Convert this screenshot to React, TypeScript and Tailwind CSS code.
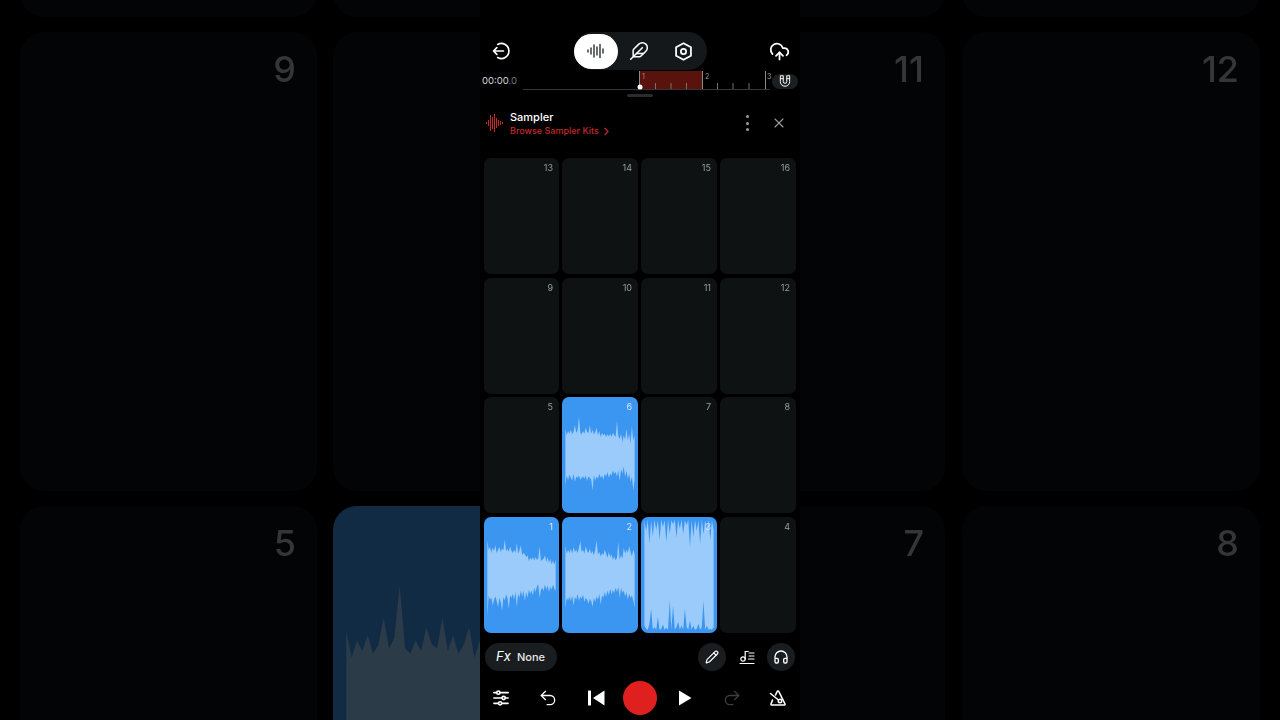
import {
  ChevronRight,
  CloudUpload,
  Feather,
  Headphones,
  Pencil,
  Redo2,
  Undo2,
  X,
} from "lucide-react";

const wave1 = {
  top: [90, 118, 110, 128, 112, 122, 105, 128, 118, 110, 125, 115, 120, 88, 122, 115, 125, 108, 122, 128, 118, 128, 98, 130, 120, 105, 135, 128, 132, 140, 135, 152, 142, 148, 140, 150, 140, 148, 145, 108, 152, 148, 145, 135, 155, 140, 158, 145, 162, 150, 162, 148],
  bottom: [318, 255, 268, 262, 285, 268, 258, 272, 290, 262, 275, 300, 260, 270, 252, 262, 295, 255, 262, 250, 268, 245, 290, 250, 262, 240, 258, 240, 272, 245, 262, 238, 250, 240, 255, 232, 245, 228, 222, 262, 238, 232, 242, 222, 238, 225, 245, 228, 238, 222, 235, 240],
};
const wave2 = {
  top: [105, 130, 118, 128, 115, 130, 110, 125, 118, 128, 112, 92, 125, 118, 130, 108, 122, 128, 115, 130, 122, 135, 118, 90, 132, 125, 138, 128, 135, 118, 130, 142, 125, 140, 132, 148, 138, 150, 142, 95, 148, 135, 145, 112, 130, 118, 128, 108, 125, 138, 118, 132],
  bottom: [292, 262, 270, 258, 272, 255, 285, 260, 268, 250, 272, 258, 265, 252, 275, 262, 268, 280, 265, 272, 290, 262, 275, 258, 268, 250, 282, 255, 262, 245, 260, 240, 255, 235, 252, 238, 248, 232, 245, 230, 262, 232, 248, 240, 258, 245, 268, 250, 262, 255, 270, 292],
};
const wave3 = {
  top: [30, 62, 28, 100, 30, 78, 28, 60, 30, 88, 28, 50, 30, 95, 28, 70, 30, 42, 28, 82, 30, 55, 28, 72, 30, 45, 28, 110, 30, 80, 28, 62, 30, 100, 28, 72, 30, 55, 28, 88, 30, 60],
  bottom: [345, 355, 358, 340, 295, 358, 350, 358, 320, 358, 355, 342, 358, 352, 358, 270, 358, 285, 358, 350, 335, 358, 345, 358, 295, 350, 358, 330, 358, 345, 358, 355, 340, 358, 350, 272, 358, 345, 358, 355, 358, 350],
};
const wave6 = {
  top: [115, 135, 122, 130, 118, 132, 125, 105, 128, 120, 80, 128, 132, 122, 130, 112, 125, 128, 105, 130, 118, 132, 125, 112, 135, 122, 140, 128, 135, 130, 140, 132, 138, 130, 140, 128, 135, 140, 92, 138, 145, 130, 155, 135, 148, 115, 150, 130, 160, 108, 150, 135],
  bottom: [285, 255, 268, 252, 262, 270, 250, 275, 258, 262, 255, 268, 262, 258, 265, 255, 272, 258, 262, 268, 300, 255, 270, 258, 265, 250, 262, 255, 268, 250, 258, 245, 262, 250, 255, 240, 250, 245, 258, 240, 272, 235, 250, 228, 260, 240, 265, 250, 275, 258, 300, 268],
};

function Wave({ data, fill }: { data: { top: number[]; bottom: number[] }; fill: string }) {
  const step = (arr: number[]) => 205 / (arr.length - 1);
  const top = data.top.map((y, i) => `${10 + i * step(data.top)},${y}`);
  const bottom = data.bottom.map((y, i) => `${10 + i * step(data.bottom)},${y}`).reverse();
  return (
    <svg className="h-full w-full" viewBox="0 20 225 348" preserveAspectRatio="none">
      <polygon points={[...top, ...bottom].join(" ")} fill={fill} />
    </svg>
  );
}

function Pad({ n, data }: { n: number; data?: { top: number[]; bottom: number[] } }) {
  return (
    <div className={`relative overflow-hidden rounded-[7px] ${data ? "bg-[#3b96f1]" : "bg-[#0f1213]"}`}>
      {data && <Wave data={data} fill="#9bcbfa" />}
      <span className={`absolute top-[4px] right-[6px] text-[9px] leading-[11px] [will-change:opacity] ${data ? "text-[#d5e8fb]" : "text-[#9a9c9d]"}`}>
        {n}
      </span>
    </div>
  );
}

function BackPad({ n, data }: { n?: number; data?: { top: number[]; bottom: number[] } }) {
  return (
    <div className={`relative overflow-hidden rounded-[24px] ${data ? "bg-[#122b45]" : "bg-[#030405]"}`}>
      {data && <Wave data={data} fill="#2c3b48" />}
      {n && (
        <span className="absolute top-[15px] right-[21px] text-[36px] leading-[44px] font-medium text-[#353636] [will-change:opacity]">
          {n}
        </span>
      )}
    </div>
  );
}

function Ruler() {
  const ticks = [655.5, 671, 686.5, 717.5, 733, 749];
  return (
    <svg className="h-[20px] w-[286px]" viewBox="515 71 286 20">
      <line x1="523" y1="89.5" x2="770" y2="89.5" stroke="#333638" />
      <rect x="640" y="71" width="62" height="18" fill="#5a120c" />
      {[639.5, 702.5, 765.5].map((x) => (
        <line key={x} x1={x} y1="71" x2={x} y2="89" stroke="#8a8a8a" />
      ))}
      {ticks.map((x) => (
        <line key={x} x1={x} y1="83" x2={x} y2="89" stroke="#77706e" />
      ))}
      <text x="642" y="79" fontSize="7" fill="#a88">1</text>
      <text x="705" y="79" fontSize="7" fill="#999">2</text>
      <text x="767" y="79" fontSize="7" fill="#999">3</text>
      <circle cx="640" cy="87" r="2.5" fill="#fff" />
    </svg>
  );
}

function SamplerIcon() {
  const bars = [[0.5, 1], [2.5, 3], [4.5, 8], [6.5, 6], [8.5, 9], [10.5, 5], [12.5, 3], [14.5, 2], [16.5, 1]];
  return (
    <svg className="h-[18px] w-[18px]" viewBox="0 0 18 18" stroke="#c5282a" strokeWidth="1">
      {bars.map(([x, h]) => (
        <line key={x} x1={x} y1={9 - h} x2={x} y2={9 + h} />
      ))}
    </svg>
  );
}

function App() {
  return (
    <div className="flex h-[720px] w-[1280px] overflow-hidden bg-black font-['Inter',sans-serif] text-white antialiased">
      <div className="h-[720px] w-[480px] shrink-0 overflow-hidden">
        <div className="mt-[-442px] ml-[20px] grid w-[612px] grid-cols-[297px_299px] grid-rows-[459px_459px_459px] gap-x-[16px] gap-y-[15px]">
          <BackPad />
          <BackPad />
          <BackPad n={9} />
          <BackPad />
          <BackPad n={5} />
          <BackPad data={wave6} />
        </div>
      </div>

      <div className="flex h-[720px] w-[320px] shrink-0 flex-col bg-black">
        <div className="mt-[32px] flex h-[38px] items-center">
          <svg className="ml-[11px] h-[20px] w-[20px]" viewBox="0 0 24 24" fill="none" stroke="#fff" strokeWidth="2" strokeLinecap="round" strokeLinejoin="round">
            <path d="M8 4.2a9 9 0 1 1 0 15.6" />
            <path d="M15 12H3m4-4-4 4 4 4" />
          </svg>
          <div className="ml-[63px] flex h-[38px] w-[133px] items-center rounded-full bg-[#15181a]">
            <div className="flex h-[35px] w-[44px] items-center justify-center rounded-full bg-white">
              <svg className="h-[20px] w-[20px]" viewBox="0 0 20 20" stroke="#2a2d30" strokeWidth="1.4" strokeLinecap="round">
                <path d="M2 9v2M5 7v6M8 4v12M11 6v8M14 3.5v13M17 8v4" />
              </svg>
            </div>
            <Feather className="ml-[11px] h-[20px] w-[20px]" strokeWidth={1.8} />
            <svg className="ml-[24px] h-[21px] w-[21px]" viewBox="0 0 24 24" fill="none" stroke="#fff" strokeWidth="2" strokeLinejoin="round">
              <path d="M12 2.5 20.5 7.2v9.6L12 21.5l-8.5-4.7V7.2z" />
              <circle cx="12" cy="12" r="3" />
            </svg>
          </div>
          <CloudUpload className="mr-[10px] ml-auto h-[21px] w-[21px]" strokeWidth={2} />
        </div>

        <div className="mt-[1px] flex h-[20px] items-center">
          <span className="ml-[2px] w-[33px] text-[9.5px] leading-[20px] text-[#d8d8d8]">
            00:00<span className="text-[#77797a]">.0</span>
          </span>
          <Ruler />
          <div className="ml-[-29px] flex h-[15px] w-[26px] items-center justify-center rounded-full bg-[#1c1f21]">
            <svg className="h-[14px] w-[14px]" viewBox="0 0 24 24" fill="none" stroke="#fff" strokeWidth="1.7" strokeLinejoin="round">
              <path d="M4 3v10a8 8 0 0 0 16 0V3h-5v10a3 3 0 0 1-6 0V3zM4 8h5M15 8h5" />
            </svg>
          </div>
        </div>

        <div className="mx-auto mt-[3px] h-[3px] w-[26px] rounded-full bg-[#2a2d30]" />

        <div className="mt-[12px] flex h-[28px] items-center">
          <div className="ml-[6px] flex w-[24px] items-center">
            <SamplerIcon />
          </div>
          <div className="flex flex-col pt-[2px]">
            <span className="text-[11px] leading-[14px] font-medium text-white">Sampler</span>
            <span className="flex items-center text-[9px] leading-[14px] font-medium text-[#c5282a]">
              Browse Sampler Kits
              <ChevronRight className="ml-[1px] h-[13px] w-[13px]" strokeWidth={2} />
            </span>
          </div>
          <div className="mr-[22px] ml-auto flex flex-col gap-[3.5px]">
            <div className="h-[3px] w-[3px] rounded-full bg-[#9a9c9d]" />
            <div className="h-[3px] w-[3px] rounded-full bg-[#9a9c9d]" />
            <div className="h-[3px] w-[3px] rounded-full bg-[#9a9c9d]" />
          </div>
          <X className="mr-[13px] h-[16px] w-[16px] text-[#9a9c9d]" strokeWidth={1.6} />
        </div>

        <div className="mx-[4px] mt-[21px] grid h-[475px] grid-cols-[75px_76px_76px_76px] grid-rows-4 gap-x-[3px] gap-y-[3.5px]">
          <Pad n={13} />
          <Pad n={14} />
          <Pad n={15} />
          <Pad n={16} />
          <Pad n={9} />
          <Pad n={10} />
          <Pad n={11} />
          <Pad n={12} />
          <Pad n={5} />
          <Pad n={6} data={wave6} />
          <Pad n={7} />
          <Pad n={8} />
          <Pad n={1} data={wave1} />
          <Pad n={2} data={wave2} />
          <Pad n={3} data={wave3} />
          <Pad n={4} />
        </div>

        <div className="mt-[10px] flex h-[28px] items-center">
          <div className="ml-[5px] flex h-[28px] w-[72px] items-center rounded-full bg-[#1a1d1f] pl-[11px]">
            <span className="w-[21px] text-[13px] italic text-white">Fx</span>
            <span className="text-[11px] font-medium text-[#e8e8e8]">None</span>
          </div>
          <div className="ml-auto flex h-[28px] w-[28px] items-center justify-center rounded-full bg-[#1a1d1f]">
            <Pencil className="h-[14px] w-[14px]" strokeWidth={2} />
          </div>
          <svg className="ml-[13px] h-[16px] w-[16px]" viewBox="0 0 16 16" fill="none" stroke="#fff" strokeWidth="1.2" strokeLinecap="round">
            <circle cx="4" cy="10" r="2.2" />
            <path d="M6.2 10V2.5h3M10 4h5M10 7h5M9.5 10h5.5M1 14.5h14" />
          </svg>
          <div className="mr-[5px] ml-[12px] flex h-[28px] w-[28px] items-center justify-center rounded-full bg-[#1a1d1f]">
            <Headphones className="h-[16px] w-[16px]" strokeWidth={2} />
          </div>
        </div>

        <div className="mt-[10px] flex h-[34px] items-center justify-between">
          <div className="flex w-[44px] justify-center">
            <svg className="mr-[2px] h-[16px] w-[16px]" viewBox="0 0 18 18" fill="none" stroke="#fff" strokeWidth="1.8" strokeLinecap="round">
              <path d="M1 3h3M8 3h9M1 9h9M14 9h3M1 15h5M10 15h7" />
              <circle cx="6" cy="3" r="1.8" />
              <circle cx="12" cy="9" r="1.8" />
              <circle cx="8" cy="15" r="1.8" />
            </svg>
          </div>
          <div className="flex w-[44px] justify-center">
            <Undo2 className="h-[20px] w-[20px]" strokeWidth={1.6} />
          </div>
          <div className="flex w-[44px] justify-center">
            <svg className="ml-[4px] h-[16px] w-[17px]" viewBox="0 0 17 16" fill="#fff">
              <rect x="0" y="0.5" width="3" height="15" rx="0.5" />
              <path d="M16.5 0.5v15L5 8z" />
            </svg>
          </div>
          <div className="flex w-[44px] justify-center">
            <div className="h-[34px] w-[34px] rounded-full bg-[#e01f1f]" />
          </div>
          <div className="flex w-[44px] justify-center">
            <svg className="mr-[3px] h-[16px] w-[14px]" viewBox="0 0 14 16" fill="#fff">
              <path d="M1 0.5v15L13.5 8z" />
            </svg>
          </div>
          <div className="flex w-[44px] justify-center">
            <Redo2 className="h-[20px] w-[20px] text-[#3c3e40]" strokeWidth={1.6} />
          </div>
          <div className="flex w-[44px] justify-center">
            <svg className="h-[18px] w-[18px]" viewBox="0 0 18 18" fill="none" stroke="#fff" strokeWidth="1.6" strokeLinecap="round" strokeLinejoin="round">
              <path d="M6.5 6 8 2.8c.3-.9 1.7-.9 2 0l6 12.2c.2.6-.2 1-.8 1H2.8c-.6 0-1-.4-.8-1L3.5 11" />
              <path d="M1.5 4.5 9.5 11" />
              <circle cx="11" cy="12" r="1.7" />
            </svg>
          </div>
        </div>
      </div>

      <div className="h-[720px] w-[480px] shrink-0 overflow-hidden">
        <div className="mt-[-442px] ml-[-154px] grid w-[614px] grid-cols-[299px_298px] grid-rows-[459px_459px_459px] gap-x-[17px] gap-y-[15px]">
          <BackPad />
          <BackPad />
          <BackPad n={11} />
          <BackPad n={12} />
          <BackPad n={7} />
          <BackPad n={8} />
        </div>
      </div>
    </div>
  );
}

export default App;
